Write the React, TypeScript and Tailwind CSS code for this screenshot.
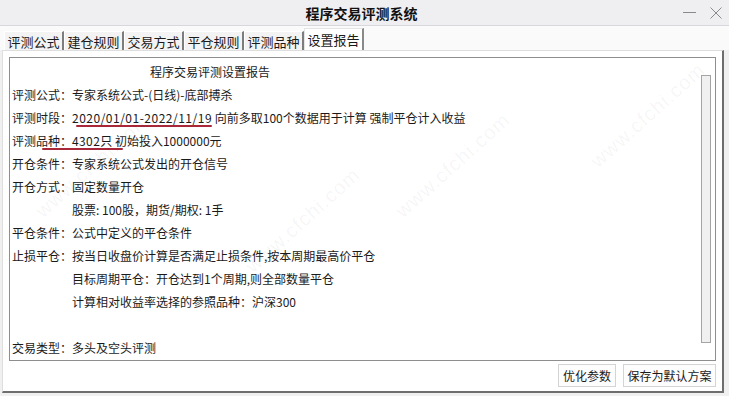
import React from "react";

const tabs = ["评测公式", "建仓规则", "交易方式", "平仓规则", "评测品种", "设置报告"];

const rows: { label: string; value: React.ReactNode }[] = [
  { label: "评测公式：", value: "专家系统公式-(日线)-底部搏杀" },
  {
    label: "评测时段：",
    value: (
      <>
        <span className="tracking-[0.5px]">2020/01/01-2022/11/19</span> 向前多取100个数据用于计算 强制平仓计入收益
      </>
    ),
  },
  { label: "评测品种：", value: <><span className="tracking-[0.4px]">4302</span>只 初始投入1000000元</> },
  { label: "开仓条件：", value: "专家系统公式发出的开仓信号" },
  { label: "开仓方式：", value: "固定数量开仓" },
  { label: "", value: "股票: 100股，期货/期权: 1手" },
  { label: "平仓条件：", value: "公式中定义的平仓条件" },
  { label: "止损平仓：", value: "按当日收盘价计算是否满足止损条件,按本周期最高价平仓" },
  { label: "", value: "目标周期平仓：开仓达到1个周期,则全部数量平仓" },
  { label: "", value: "计算相对收益率选择的参照品种：沪深300" },
  { label: "", value: "" },
  { label: "交易类型：", value: "多头及空头评测" },
];

const marks = [
  { x: 20, y: 150 },
  { x: 230, y: 205 },
  { x: 380, y: 150 },
  { x: 575, y: 100 },
];

export default function App() {
  return (
    <div
      className="w-[729px] h-[396px] bg-[#f0f0f0] overflow-hidden relative text-[#1a1a1a] flex flex-col"
      style={{ fontFamily: '"Noto Sans CJK SC", "Noto Sans", sans-serif' }}
    >
      {/* title bar */}
      <div className="h-[26px] bg-[#efeff2] border-b border-[#d8d8dc] flex items-center">
        <div className="flex-1" />
        <div className="text-[14px] font-bold text-[#111] leading-none">程序交易评测系统</div>
        <div className="flex-1 flex justify-end items-center gap-[14px] pr-[6px]">
          <div className="w-[13px] h-px bg-[#8a8a8a]" />
          <svg width="12" height="12" viewBox="0 0 12 12" className="mr-[1px]">
            <path d="M0.5 0.5 L11.5 11.5 M11.5 0.5 L0.5 11.5" stroke="#8a8a8a" strokeWidth="1" />
          </svg>
        </div>
      </div>

      {/* tabs */}
      <div className="h-[24px] bg-[#fafafa] flex items-end pl-[4px]">
        {tabs.map((t, i) =>
          i === tabs.length - 1 ? (
            <div
              key={t}
              className="h-[22px] w-[60px] bg-white border-l border-t border-[#e4e4e4] border-r-2 border-r-[#8a8a8a] flex items-center justify-center text-[13px] leading-none"
            >
              {t}
            </div>
          ) : (
            <div
              key={t}
              className="h-[19px] w-[60px] bg-[#f3f3f3] border-l border-t border-[#ffffff] border-r-2 border-r-[#7d7d7d] flex items-center justify-center text-[13px] leading-none"
            >
              {t}
            </div>
          )
        )}
      </div>

      {/* panel */}
      <div className="h-[343px] ml-[2px] w-[722px] bg-white border-l border-t border-[#dedede] border-r-2 border-b-2 border-r-[#6e6e6e] border-b-[#6e6e6e] flex flex-col">
        <div className="ml-[6px] mt-[6px] w-[707px] h-[304px] border border-[#8e8e8e] flex relative">
          <div className="flex-1 pl-[2px] pt-[2px] relative">
            <div className="h-[23px] flex items-center pl-[138px] text-[12px]">程序交易评测设置报告</div>
            {rows.map((r, i) => (
              <div key={i} className="h-[23px] flex items-center text-[12px] whitespace-nowrap">
                <span className="w-[60px] shrink-0">{r.label}</span>
                <span>{r.value}</span>
              </div>
            ))}
            {/* red annotation strokes */}
            <div className="absolute left-[66px] top-[67px] w-[136px] h-[2px] bg-[#a8283a] rounded-full" />
            <div className="absolute left-[32px] top-[90px] w-[81px] h-[2px] bg-[#a8283a] rounded-full" />
          </div>
          <div className="w-[15px] flex justify-start pl-[1px]">
            <div className="mt-[17px] w-[10px] h-[268px] bg-[#f0f0f0] border border-[#a4a4a4]" />
          </div>
        </div>
        <div className="flex justify-end gap-[7px] pr-[6px] mt-[3px]">
          <div className="h-[23px] w-[58px] bg-[#fdfdfd] border border-[#d4d4d4] flex items-center justify-center text-[12px]">
            优化参数
          </div>
          <div className="h-[23px] w-[93px] bg-[#fdfdfd] border border-[#d4d4d4] flex items-center justify-center text-[12px]">
            保存为默认方案
          </div>
        </div>
      </div>

      {/* watermark */}
      {marks.map((m, i) => (
        <div
          key={i}
          className="absolute pointer-events-none text-[20px] tracking-[1px] text-[#000000]/[0.05] -rotate-[42deg] whitespace-nowrap"
          style={{ left: m.x, top: m.y, fontFamily: '"Liberation Sans", sans-serif' }}
        >
          www.cfchi.com
        </div>
      ))}
    </div>
  );
}
